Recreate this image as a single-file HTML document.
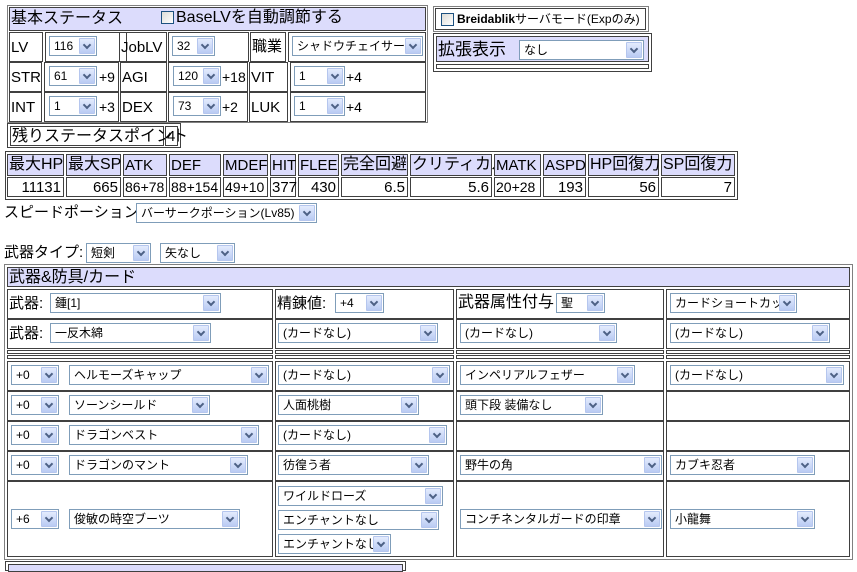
<!DOCTYPE html>
<html><head><meta charset="utf-8"><style>
*{box-sizing:border-box;margin:0;padding:0}
body{width:857px;height:566px;background:#fff;position:relative;overflow:hidden;font-family:"Liberation Sans","Noto Sans CJK JP",sans-serif;color:#000}
.o{position:absolute;border:1px solid #808080}
.c{position:absolute;border:1px solid #404040;font-size:15px;line-height:1;padding:4px 0 0 1px;white-space:nowrap}
.h{background:#dcdcfc}
.r{text-align:right;padding-right:2px}
.s{position:absolute;height:20px;border:1px solid #7f9db9;background:#fff;font-size:12px;line-height:18px;padding-left:4px;white-space:nowrap;overflow:hidden}
.s i{position:absolute;right:1px;top:1px;width:16px;height:16px;background:linear-gradient(#e3ebfd,#b9cbf3);border:1px solid #b5c6ee;border-radius:1px}
.s i:after{content:"";position:absolute;left:4px;top:3px;width:4px;height:4px;border-right:2px solid #4d6185;border-bottom:2px solid #4d6185;transform:rotate(45deg)}
.t{position:absolute;white-space:nowrap;line-height:1}
.cb{position:absolute;width:13px;height:13px;border:1px solid #1c5180;background:linear-gradient(135deg,#dcdcd7,#fff)}
</style></head><body>

<!-- basic status -->
<div class="o" style="left:7px;top:5px;width:421px;height:118px"></div>
<div class="c h" style="left:9px;top:7px;width:417px;height:24px;font-size:16px;padding-top:3px">基本ステータス</div>
<div class="cb" style="left:161px;top:11px"></div>
<div class="t" style="left:176px;top:10px;font-size:16px">BaseLVを自動調節する</div>

<div class="c" style="left:9px;top:32px;width:34px;height:30px;padding-top:7px">LV</div>
<div class="c" style="left:45px;top:32px;width:82px;height:30px"></div>
<div class="s" style="left:49px;top:36px;width:48px">116<i></i></div>
<div class="c" style="left:119px;top:32px;width:48px;height:30px;padding-top:7px">JobLV</div>
<div class="c" style="left:168px;top:32px;width:81px;height:30px"></div>
<div class="s" style="left:172px;top:36px;width:43px">32<i></i></div>
<div class="c" style="left:250px;top:32px;width:36px;height:30px;padding-top:6px">職業</div>
<div class="c" style="left:288px;top:32px;width:138px;height:30px"></div>
<div class="s" style="left:292px;top:36px;width:131px">シャドウチェイサー<i></i></div>

<div class="c" style="left:9px;top:62px;width:33px;height:30px;padding-top:7px">STR</div>
<div class="c" style="left:44px;top:62px;width:75px;height:30px"></div>
<div class="s" style="left:49px;top:66px;width:48px">61<i></i></div><div class="t" style="left:99px;top:70px;font-size:14px">+9</div>
<div class="c" style="left:120px;top:62px;width:47px;height:30px;padding-top:7px">AGI</div>
<div class="c" style="left:168px;top:62px;width:80px;height:30px"></div>
<div class="s" style="left:173px;top:66px;width:48px">120<i></i></div><div class="t" style="left:222px;top:70px;font-size:14px">+18</div>
<div class="c" style="left:249px;top:62px;width:39px;height:30px;padding-top:7px">VIT</div>
<div class="c" style="left:290px;top:62px;width:136px;height:30px"></div>
<div class="s" style="left:294px;top:66px;width:51px">1<i></i></div><div class="t" style="left:346px;top:70px;font-size:14px">+4</div>

<div class="c" style="left:9px;top:92px;width:33px;height:30px;padding-top:7px">INT</div>
<div class="c" style="left:44px;top:92px;width:75px;height:30px"></div>
<div class="s" style="left:49px;top:96px;width:48px">1<i></i></div><div class="t" style="left:99px;top:100px;font-size:14px">+3</div>
<div class="c" style="left:120px;top:92px;width:47px;height:30px;padding-top:7px">DEX</div>
<div class="c" style="left:168px;top:92px;width:80px;height:30px"></div>
<div class="s" style="left:173px;top:96px;width:48px">73<i></i></div><div class="t" style="left:222px;top:100px;font-size:14px">+2</div>
<div class="c" style="left:249px;top:92px;width:39px;height:30px;padding-top:7px">LUK</div>
<div class="c" style="left:290px;top:92px;width:136px;height:30px"></div>
<div class="s" style="left:294px;top:96px;width:51px">1<i></i></div><div class="t" style="left:346px;top:100px;font-size:14px">+4</div>

<div class="o" style="left:7px;top:123px;width:174px;height:25px;border-color:#404040"></div>
<div class="c" style="left:10px;top:126px;width:154px;height:20px;padding-top:2px;font-size:16px">残りステータスポイント</div>
<div class="c" style="left:165px;top:126px;width:13px;height:20px;padding-top:2px">4</div>

<!-- stats -->
<div class="o" style="left:5px;top:151px;width:733px;height:49px;border-color:#404040"></div>
<div class="c h" style="left:7px;top:154px;width:57px;height:22px;font-size:16px;padding-top:2px">最大HP</div>
<div class="c h" style="left:66px;top:154px;width:55px;height:22px;font-size:16px;padding-top:2px">最大SP</div>
<div class="c h" style="left:123px;top:154px;width:44px;height:22px;padding-top:3px">ATK</div>
<div class="c h" style="left:169px;top:154px;width:52px;height:22px;padding-top:3px">DEF</div>
<div class="c h" style="left:223px;top:154px;width:45px;height:22px;padding-top:3px">MDEF</div>
<div class="c h" style="left:270px;top:154px;width:26px;height:22px;padding-top:3px">HIT</div>
<div class="c h" style="left:298px;top:154px;width:41px;height:22px;padding-top:3px">FLEE</div>
<div class="c h" style="left:341px;top:154px;width:67px;height:22px;font-size:16px;padding-top:2px">完全回避</div>
<div class="c h" style="left:410px;top:154px;width:82px;height:22px;font-size:16px;padding-top:2px">クリティカル</div>
<div class="c h" style="left:494px;top:154px;width:47px;height:22px;padding-top:3px">MATK</div>
<div class="c h" style="left:543px;top:154px;width:43px;height:22px;padding-top:3px">ASPD</div>
<div class="c h" style="left:588px;top:154px;width:71px;height:22px;font-size:16px;padding-top:2px">HP回復力</div>
<div class="c h" style="left:661px;top:154px;width:74px;height:22px;font-size:16px;padding-top:2px">SP回復力</div>
<div class="c r" style="left:7px;top:177px;width:57px;height:20px;padding-top:2px">11131</div>
<div class="c r" style="left:66px;top:177px;width:55px;height:20px;padding-top:2px">665</div>
<div class="c" style="left:123px;top:177px;width:44px;height:20px;padding-top:2px;font-size:14px">86+78</div>
<div class="c" style="left:169px;top:177px;width:52px;height:20px;padding-top:2px;font-size:14px">88+154</div>
<div class="c" style="left:223px;top:177px;width:45px;height:20px;padding-top:2px;font-size:14px">49+10</div>
<div class="c" style="left:270px;top:177px;width:26px;height:20px;padding-top:2px">377</div>
<div class="c r" style="left:298px;top:177px;width:41px;height:20px;padding-top:2px">430</div>
<div class="c r" style="left:341px;top:177px;width:67px;height:20px;padding-top:2px">6.5</div>
<div class="c r" style="left:410px;top:177px;width:82px;height:20px;padding-top:2px">5.6</div>
<div class="c" style="left:494px;top:177px;width:47px;height:20px;padding-top:2px;font-size:14px">20+28</div>
<div class="c r" style="left:543px;top:177px;width:43px;height:20px;padding-top:2px">193</div>
<div class="c r" style="left:588px;top:177px;width:71px;height:20px;padding-top:2px">56</div>
<div class="c r" style="left:661px;top:177px;width:74px;height:20px;padding-top:2px">7</div>

<!-- right panel -->
<div class="o" style="left:433px;top:6px;width:216px;height:26px"></div>
<div class="c" style="left:435px;top:8px;width:211px;height:22px"></div>
<div class="cb" style="left:441px;top:13px"></div>
<div class="t" style="left:457px;top:13px;font-size:12px"><b>Breidablik</b>サーバモード(Expのみ)</div>
<div class="o" style="left:433px;top:33px;width:219px;height:39px;border-color:#404040"></div>
<div class="c h" style="left:436px;top:36px;width:213px;height:26px;font-size:17px;padding-top:4px">拡張表示</div>
<div class="s" style="left:519px;top:40px;width:125px">なし<i></i></div>
<div class="c" style="left:436px;top:64px;width:213px;height:5px;padding:0"></div>

<div class="t" style="left:4px;top:205px;font-size:15px">スピードポーション:</div>
<div class="s" style="left:136px;top:203px;width:181px">バーサークポーション(Lv85)<i></i></div>
<div class="t" style="left:4px;top:245px;font-size:15px">武器タイプ:</div>
<div class="s" style="left:86px;top:243px;width:65px">短剣<i></i></div>
<div class="s" style="left:160px;top:243px;width:75px">矢なし<i></i></div>

<!-- equipment -->
<div class="o" style="left:4px;top:264px;width:849px;height:296px"></div>
<div class="c h" style="left:7px;top:267px;width:843px;height:20px;font-size:16px;padding-top:2px">武器&amp;防具/カード</div>

<div class="c" style="left:7px;top:289px;width:266px;height:30px;padding-top:6px">武器:</div>
<div class="c" style="left:275px;top:289px;width:179px;height:30px;padding-top:6px">精錬値:</div>
<div class="c" style="left:456px;top:289px;width:208px;height:30px;padding-top:5px;font-size:16px">武器属性付与</div>
<div class="c" style="left:666px;top:289px;width:184px;height:30px"></div>
<div class="s" style="left:50px;top:293px;width:171px">鍾[1]<i></i></div>
<div class="s" style="left:335px;top:293px;width:49px">+4<i></i></div>
<div class="s" style="left:556px;top:293px;width:49px">聖<i></i></div>
<div class="s" style="left:670px;top:293px;width:127px">カードショートカット<i></i></div>

<div class="c" style="left:7px;top:319px;width:266px;height:30px;padding-top:6px">武器:</div>
<div class="c" style="left:275px;top:319px;width:179px;height:30px"></div>
<div class="c" style="left:456px;top:319px;width:208px;height:30px"></div>
<div class="c" style="left:666px;top:319px;width:184px;height:30px"></div>
<div class="s" style="left:50px;top:323px;width:161px">一反木綿<i></i></div>
<div class="s" style="left:278px;top:323px;width:160px">(カードなし)<i></i></div>
<div class="s" style="left:460px;top:323px;width:157px">(カードなし)<i></i></div>
<div class="s" style="left:670px;top:323px;width:160px">(カードなし)<i></i></div>

<div class="c" style="left:7px;top:350px;width:266px;height:4px;padding:0"></div>
<div class="c" style="left:275px;top:350px;width:179px;height:4px;padding:0"></div>
<div class="c" style="left:456px;top:350px;width:208px;height:4px;padding:0"></div>
<div class="c" style="left:666px;top:350px;width:184px;height:4px;padding:0"></div>
<div class="c" style="left:7px;top:355px;width:266px;height:4px;padding:0"></div>
<div class="c" style="left:275px;top:355px;width:179px;height:4px;padding:0"></div>
<div class="c" style="left:456px;top:355px;width:208px;height:4px;padding:0"></div>
<div class="c" style="left:666px;top:355px;width:184px;height:4px;padding:0"></div>

<!-- rows 3-6 -->
<div class="c" style="left:7px;top:361px;width:266px;height:30px"></div>
<div class="c" style="left:275px;top:361px;width:179px;height:30px"></div>
<div class="c" style="left:456px;top:361px;width:208px;height:30px"></div>
<div class="c" style="left:666px;top:361px;width:184px;height:30px"></div>
<div class="s" style="left:11px;top:365px;width:48px">+0<i></i></div>
<div class="s" style="left:69px;top:365px;width:200px">ヘルモーズキャップ<i></i></div>
<div class="s" style="left:278px;top:365px;width:172px">(カードなし)<i></i></div>
<div class="s" style="left:460px;top:365px;width:175px">インペリアルフェザー<i></i></div>
<div class="s" style="left:670px;top:365px;width:174px">(カードなし)<i></i></div>

<div class="c" style="left:7px;top:391px;width:266px;height:30px"></div>
<div class="c" style="left:275px;top:391px;width:179px;height:30px"></div>
<div class="c" style="left:456px;top:391px;width:208px;height:30px"></div>
<div class="c" style="left:666px;top:391px;width:184px;height:30px"></div>
<div class="s" style="left:11px;top:395px;width:48px">+0<i></i></div>
<div class="s" style="left:69px;top:395px;width:141px">ソーンシールド<i></i></div>
<div class="s" style="left:278px;top:395px;width:141px">人面桃樹<i></i></div>
<div class="s" style="left:460px;top:395px;width:143px">頭下段 装備なし<i></i></div>

<div class="c" style="left:7px;top:421px;width:266px;height:30px"></div>
<div class="c" style="left:275px;top:421px;width:179px;height:30px"></div>
<div class="c" style="left:456px;top:421px;width:208px;height:30px"></div>
<div class="c" style="left:666px;top:421px;width:184px;height:30px"></div>
<div class="s" style="left:11px;top:425px;width:48px">+0<i></i></div>
<div class="s" style="left:69px;top:425px;width:190px">ドラゴンベスト<i></i></div>
<div class="s" style="left:278px;top:425px;width:169px">(カードなし)<i></i></div>

<div class="c" style="left:7px;top:451px;width:266px;height:30px"></div>
<div class="c" style="left:275px;top:451px;width:179px;height:30px"></div>
<div class="c" style="left:456px;top:451px;width:208px;height:30px"></div>
<div class="c" style="left:666px;top:451px;width:184px;height:30px"></div>
<div class="s" style="left:11px;top:455px;width:48px">+0<i></i></div>
<div class="s" style="left:69px;top:455px;width:179px">ドラゴンのマント<i></i></div>
<div class="s" style="left:278px;top:455px;width:151px">彷徨う者<i></i></div>
<div class="s" style="left:460px;top:455px;width:202px">野牛の角<i></i></div>
<div class="s" style="left:670px;top:455px;width:145px">カブキ忍者<i></i></div>

<div class="c" style="left:7px;top:481px;width:266px;height:76px"></div>
<div class="c" style="left:275px;top:481px;width:179px;height:76px"></div>
<div class="c" style="left:456px;top:481px;width:208px;height:76px"></div>
<div class="c" style="left:666px;top:481px;width:184px;height:76px"></div>
<div class="s" style="left:11px;top:509px;width:48px">+6<i></i></div>
<div class="s" style="left:69px;top:509px;width:171px">俊敏の時空ブーツ<i></i></div>
<div class="s" style="left:278px;top:486px;width:165px">ワイルドローズ<i></i></div>
<div class="s" style="left:278px;top:510px;width:161px">エンチャントなし<i></i></div>
<div class="s" style="left:278px;top:534px;width:113px">エンチャントなし<i></i></div>
<div class="s" style="left:460px;top:509px;width:202px">コンチネンタルガードの印章<i></i></div>
<div class="s" style="left:670px;top:509px;width:145px">小龍舞<i></i></div>

<div class="o" style="left:5px;top:561px;width:401px;height:10px;border-color:#404040"></div>
<div class="c h" style="left:8px;top:564px;width:395px;height:8px;padding:0"></div>
</body></html>
